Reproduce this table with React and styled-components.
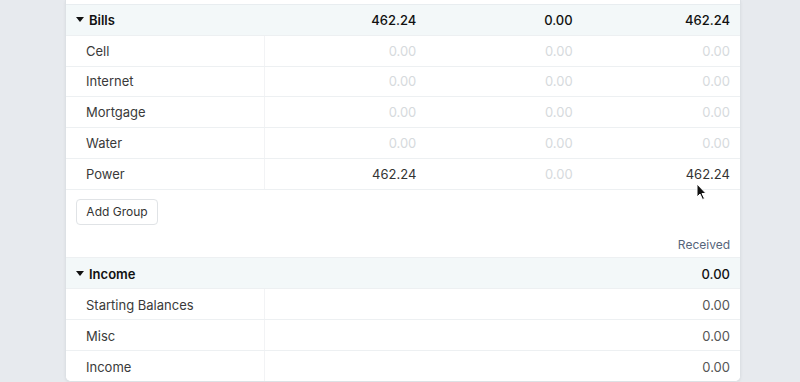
import styled, { createGlobalStyle } from "styled-components";

const GlobalStyle = createGlobalStyle`
  * {
    box-sizing: border-box;
  }

  body {
    margin: 0;
    background: #e7eaee;
    font-family: Inter, "Liberation Sans", sans-serif;
    overflow: hidden;
  }
`;

const Page = styled.div`
  width: 800px;
  height: 382px;
  padding-left: 65px;
  position: relative;
`;

const Card = styled.div`
  width: 676px;
  background: #fff;
  border-left: 1px solid #dde1e5;
  border-right: 1px solid #dde1e5;
  border-bottom: 1px solid #dde1e5;
  border-radius: 0 0 6px 6px;
  box-shadow: 0 1px 3px rgba(0, 0, 0, 0.06);
  overflow: hidden;
`;

const TopEdge = styled.div`
  height: 5px;
  border-bottom: 1px solid #e8edf0;
`;

const Row = styled.div`
  display: grid;
  grid-template-columns: 199px ${(p) => (p.$single ? "1fr" : "1fr 1fr 1fr")};
  height: ${(p) => (p.$last ? "30px" : p.$single ? "31px" : "30.8px")};
  align-items: stretch;
  border-bottom: ${(p) => (p.$last ? "none" : "1px solid #edf0f2")};
  background: ${(p) => (p.$group ? "#f3f8f9" : "#fff")};
  font-size: 13px;
  font-weight: ${(p) => (p.$group ? 600 : 400)};
  color: ${(p) => (p.$group ? "#111" : "#3a3a3a")};
`;

const NameCell = styled.div`
  display: flex;
  align-items: center;
  gap: 5px;
  padding-top: ${(p) => (p.$low ? "2px" : "0")};
  padding-left: ${(p) => (p.$group ? "10px" : "20px")};
  border-right: ${(p) => (p.$group ? "none" : "1px solid #f2f3f5")};
`;

const Caret = styled.span`
  width: 0;
  height: 0;
  border-left: 4px solid transparent;
  border-right: 4px solid transparent;
  border-top: 5px solid #111;
`;

const Num = styled.div`
  display: flex;
  align-items: center;
  justify-content: flex-end;
  padding-top: ${(p) => (p.$low ? "2px" : "0")};
  padding-right: ${(p) => p.$pad || "10px"};
  font-weight: ${(p) => (p.$group ? 500 : 400)};
  color: ${(p) => (p.$faint ? "#d6dadd" : p.$group ? "#111" : p.$muted ? "#555" : "#333")};
`;

const Footer = styled.div`
  height: 68px;
  border-bottom: 1px solid #edf0f2;
  padding: 9px 10px 0 10px;
  display: flex;
  flex-direction: column;
`;

const Button = styled.button`
  align-self: flex-start;
  height: 26px;
  width: 82px;
  border: 1px solid #e0e3e6;
  border-radius: 4px;
  background: #fff;
  font-family: inherit;
  font-size: 12px;
  color: #333;
  padding: 0;
`;

const HeaderLabel = styled.div`
  margin-top: auto;
  height: 25px;
  display: flex;
  align-items: center;
  justify-content: flex-end;
  font-size: 12px;
  color: #56657a;
`;

const Cursor = styled.svg`
  position: absolute;
  left: 696px;
  top: 183px;
`;

const bills = [
  ["Cell", "0.00", "0.00", "0.00"],
  ["Internet", "0.00", "0.00", "0.00"],
  ["Mortgage", "0.00", "0.00", "0.00"],
  ["Water", "0.00", "0.00", "0.00"],
  ["Power", "462.24", "0.00", "462.24"],
];

const income = [
  ["Starting Balances", "0.00"],
  ["Misc", "0.00"],
  ["Income", "0.00"],
];

const pads = ["7px", "9px", "10px"];

const App = () => (
  <Page>
    <GlobalStyle />
    <Card>
      <TopEdge />
      <Row $group>
        <NameCell $group>
          <Caret />
          Bills
        </NameCell>
        <Num $group $pad={pads[0]}>462.24</Num>
        <Num $group $pad={pads[1]}>0.00</Num>
        <Num $group $pad={pads[2]}>462.24</Num>
      </Row>
      {bills.map(([name, ...vals]) => (
        <Row key={name}>
          <NameCell>{name}</NameCell>
          {vals.map((v, i) => (
            <Num key={i} $pad={pads[i]} $faint={v === "0.00"}>
              {v}
            </Num>
          ))}
        </Row>
      ))}
      <Footer>
        <Button>Add Group</Button>
        <HeaderLabel>Received</HeaderLabel>
      </Footer>
      <Row $group $single>
        <NameCell $group $low>
          <Caret />
          Income
        </NameCell>
        <Num $group $low>0.00</Num>
      </Row>
      {income.map(([name, v], i) => (
        <Row key={name} $single $last={i === income.length - 1}>
          <NameCell $low>{name}</NameCell>
          <Num $muted $low>{v}</Num>
        </Row>
      ))}
    </Card>
    <Cursor width="12" height="18" viewBox="0 0 12 18">
      <path d="M1 1 L1 14 L4 11 L6.5 16.5 L8.5 15.5 L6 10.5 L10 10.5 Z" fill="#111" stroke="#fff" strokeWidth="1" />
    </Cursor>
  </Page>
);

export default App;
